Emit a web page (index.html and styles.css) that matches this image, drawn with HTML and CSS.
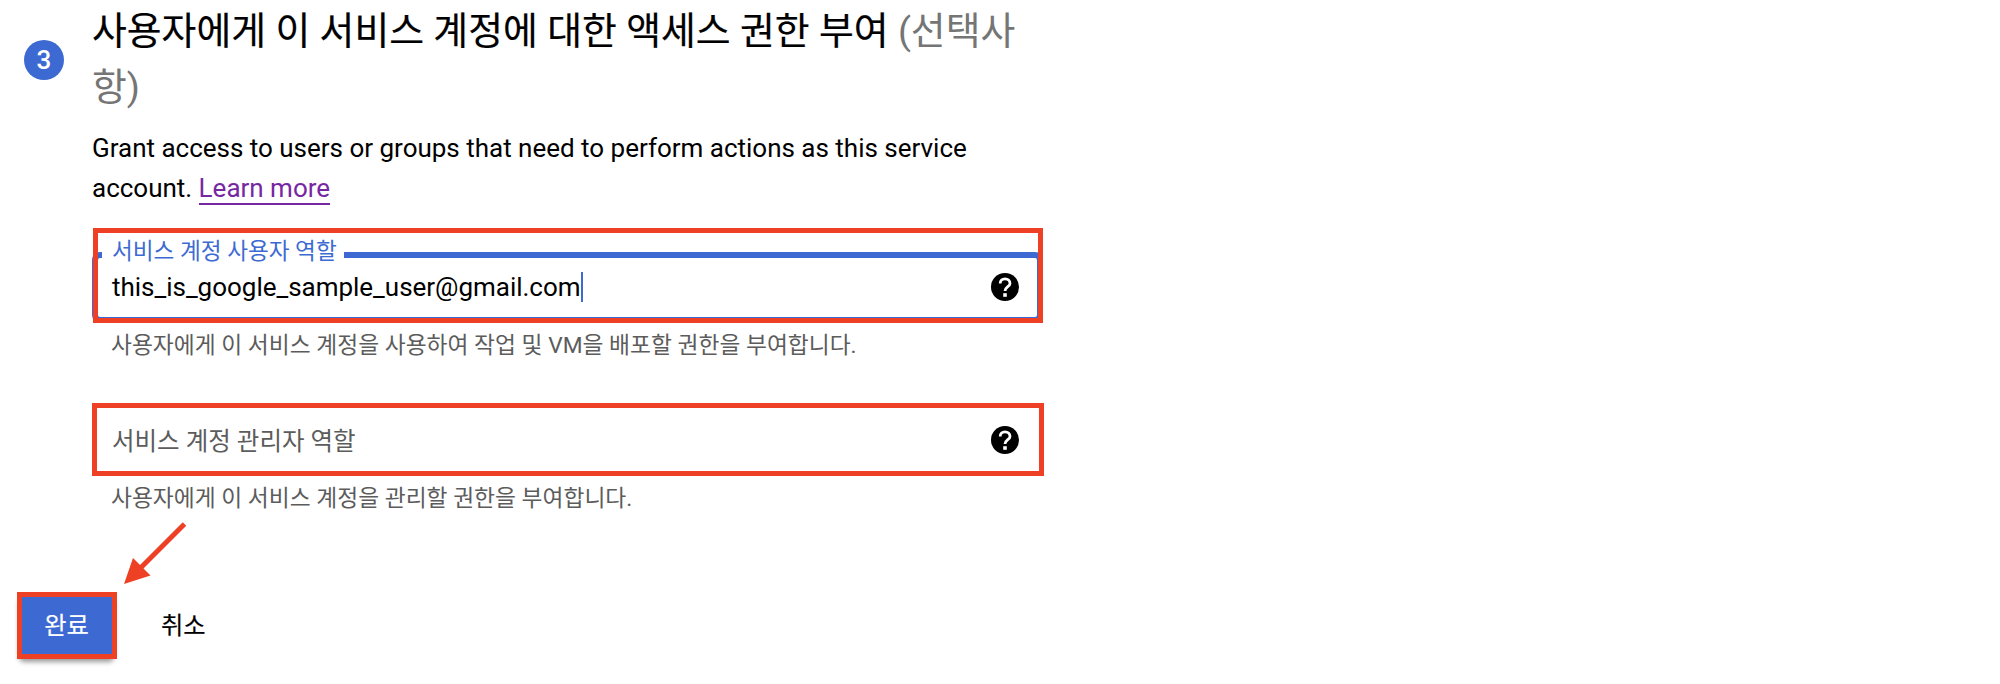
FILE: index.html
```html
<!DOCTYPE html>
<html lang="ko">
<head>
<meta charset="utf-8">
<title>서비스 계정</title>
<link rel="stylesheet" href="styles.css">
</head>
<body>
<main class="step">
  <div class="step-number">3</div>
  <section class="step-body">
    <h2 class="title">사용자에게 이 서비스 계정에 대한 액세스 권한 부여 <span class="optional">(선택사<br>항)</span></h2>
    <p class="intro">Grant access to users or groups that need to perform actions as this service<br>account. <a class="link">Learn more</a></p>

    <div class="field focused">
      <span class="label">서비스 계정 사용자 역할</span>
      <span class="value">this_is_google_sample_user@gmail.com</span><span class="caret"></span>
      <svg class="help" viewBox="0 0 28 28"><circle cx="14" cy="14" r="14"/><path class="q" d="M9.200 10.400C9.200 7.700 11.200 5.800 14 5.800S19 7.800 19 10.400C19 13.600 14 13.800 14 18"/><rect class="dot" x="12.200" y="20.200" width="3.600" height="3.600"/></svg>
      <span class="mark mark-first"></span>
    </div>
    <p class="hint">사용자에게 이 서비스 계정을 사용하여 작업 및 VM을 배포할 권한을 부여합니다.</p>

    <div class="field empty">
      <span class="placeholder">서비스 계정 관리자 역할</span>
      <svg class="help" viewBox="0 0 28 28"><circle cx="14" cy="14" r="14"/><path class="q" d="M9.200 10.400C9.200 7.700 11.200 5.800 14 5.800S19 7.800 19 10.400C19 13.600 14 13.800 14 18"/><rect class="dot" x="12.200" y="20.200" width="3.600" height="3.600"/></svg>
      <span class="mark mark-second"></span>
    </div>
    <p class="hint">사용자에게 이 서비스 계정을 관리할 권한을 부여합니다.</p>
  </section>
</main>
<footer class="actions">
  <button class="done">완료<span class="mark mark-done"></span></button>
  <button class="cancel">취소</button>
  <svg class="arrow" viewBox="0 0 64 64"><path class="shaft" d="M61.500 3L17 47.500"/><path class="head" d="M1 63L10 37L27.500 54.500Z"/></svg>
</footer>
</body>
</html>
```
FILE: styles.css
```css
* { box-sizing: border-box; }
body {
  margin: 0;
  height: 684px;
  overflow: hidden;
  background: #fff;
  color: #000;
  font-family: Roboto, "Noto Sans CJK KR", sans-serif;
}
h2, p { margin: 0; white-space: nowrap; }
.step { display: flex; padding-left: 24px; }
.step-number {
  width: 40px;
  height: 40px;
  margin: 40px 28px 0 0;
  border-radius: 50%;
  background: #3d6ad2;
  color: #fff;
  font-size: 26px;
  font-weight: 500;
  line-height: 41px;
  text-align: center;
}
.step-body { width: 951px; }
.title {
  height: 124px;
  padding-top: 3px;
  font-size: 37.85px;
  font-weight: 400;
  line-height: 56px;
  -webkit-text-stroke: 0.2px #000;
}
.optional { color: #757575; -webkit-text-stroke: 0; }
.intro {
  height: 128px;
  padding-top: 4px;
  font-size: 26px;
  line-height: 40px;
  letter-spacing: -0.01px;
}
.link { color: #7627a2; border-bottom: 2px solid #7627a2; }
.field {
  position: relative;
  display: flex;
  align-items: center;
  height: 71px;
  padding: 0 24px 0 20px;
  border-radius: 8px;
}
.focused { border: 6px solid #3d6ad2; padding: 0 18px 2px 14px; }
.empty { height: 72px; border: 2px solid #80868b; padding: 0 22px 0 18px; }
.label {
  position: absolute;
  left: 4px;
  top: -20px;
  width: 242px;
  height: 28px;
  padding-left: 10px;
  background: #fff;
  color: #3d6ad2;
  font-size: 22.6px;
  line-height: 27px;
  white-space: nowrap;
}
.value { font-size: 26px; letter-spacing: -0.02px; }
.caret { width: 2px; height: 30px; background: #3d6ad2; }
.help { width: 28px; height: 28px; margin-left: auto; }
.q { fill: none; stroke: #fff; stroke-width: 2.8; }
.dot { fill: #fff; }
.hint {
  height: 81px;
  padding: 7px 0 0 19px;
  color: #5c5c5c;
  font-size: 22.75px;
  line-height: 32px;
}
.placeholder { color: #5c5c5c; font-size: 24.5px; margin-top: -1px; }
.mark { position: absolute; border: 5px solid #ed4024; pointer-events: none; }
.mark-first { left: -5px; right: -6px; top: -30px; height: 95px; }
.mark-second { inset: -3px -3px -2px -2px; }
.actions {
  position: relative;
  display: flex;
  gap: 32px;
  padding: 36px 0 0 18px;
}
button {
  border: 0;
  background: none;
  padding: 0;
  color: #000;
  font: 400 24.3px/66px Roboto, "Noto Sans CJK KR", sans-serif;
  -webkit-text-stroke: 0.15px currentColor;
}
.done {
  position: relative;
  width: 97px;
  height: 65px;
  border-radius: 6px;
  background: #3d6ad2;
  color: #fff;
  box-shadow: 0 5px 5px -1px rgba(0,0,0,.4);
}
.mark-done { left: -1px; top: -1px; width: 100px; height: 67px; }
.cancel { padding-left: 14px; }
.arrow { position: absolute; left: 122.500px; top: -36px; width: 64px; height: 64px; }
.shaft { stroke: #ed4024; stroke-width: 5; fill: none; }
.head { fill: #ed4024; }
```
